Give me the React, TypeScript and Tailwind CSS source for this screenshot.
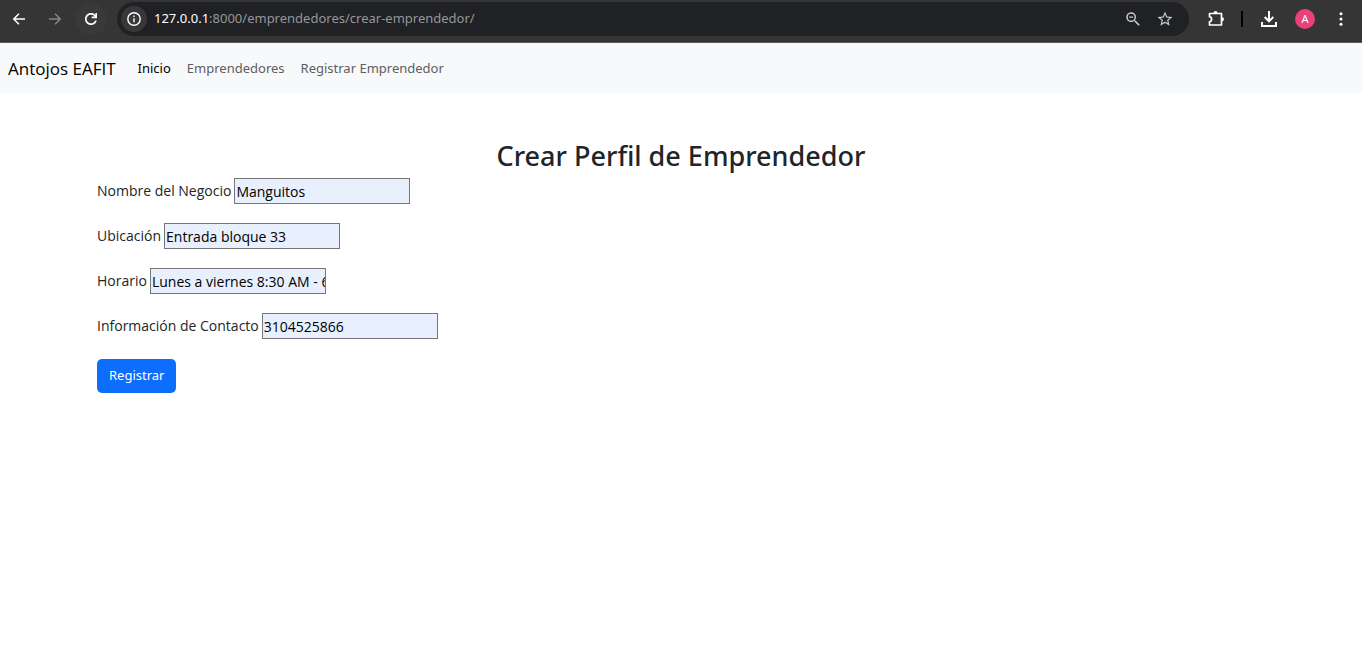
import React from "react";

type IconProps = { children: React.ReactNode; className?: string };

function Icon({ children, className = "size-[18px]" }: IconProps) {
  return (
    <svg viewBox="0 0 24 24" fill="currentColor" aria-hidden="true" className={className}>
      {children}
    </svg>
  );
}

function BrowserBar() {
  return (
    <header className="flex h-[43px] items-center border-b border-[#5c5c5c] bg-[#353535] pb-1 text-white">
      <div className="flex items-center gap-2 pl-[3px]">
        <button type="button" aria-label="Atrás" className="flex size-7 items-center justify-center">
          <Icon className="ml-1 size-[18px]">
            <path d="M20 11H7.400l5.200-5.200L11.200 4.400 3.600 12l7.600 7.600 1.400-1.400L7.400 13H20z" />
          </Icon>
        </button>
        <button type="button" aria-label="Adelante" className="flex size-7 items-center justify-center text-[#858585]">
          <Icon className="ml-1 size-[18px]">
            <path d="M4 11h12.600l-5.200-5.200 1.400-1.400 7.600 7.600-7.600 7.600-1.400-1.400 5.200-5.200H4z" />
          </Icon>
        </button>
        <button type="button" aria-label="Recargar" className="flex size-8 items-center justify-center rounded-full bg-[#393939]">
          <Icon>
            <path d="M12 20c-4.500 0-8-3.500-8-8s3.500-8 8-8c2.300 0 4.300.9 5.800 2.500V4H20v7h-7V8.800h4A5.800 5.800 0 0 0 12 6.200 5.700 5.700 0 0 0 6.200 12 5.700 5.700 0 0 0 12 17.800c2.500 0 4.600-1.500 5.400-3.800h2.300A8 8 0 0 1 12 20z" />
          </Icon>
        </button>
      </div>
      <div className="ml-[10px] flex h-[34px] min-w-0 flex-1 items-center rounded-full bg-[#202124] pl-1 pr-[15px]">
        <button type="button" aria-label="Información del sitio" className="flex size-[26px] shrink-0 items-center justify-center rounded-full bg-[#37383a]">
          <svg viewBox="0 0 16 16" fill="none" stroke="currentColor" strokeWidth="1.400" aria-hidden="true" className="size-4">
            <circle cx="8" cy="8" r="6.200" />
            <path d="M8 7.200v4M8 4.400v1.500" />
          </svg>
        </button>
        <div className="ml-[7px] min-w-0 flex-1 truncate text-[13px] text-[#969799]">
          <span className="text-white">127.0.0.1</span>:8000/emprendedores/crear-emprendedor/
        </div>
        <div className="flex items-center gap-[14px] text-[#c7c8ca]">
          <button type="button" aria-label="Zoom">
            <Icon>
              <path d="M15.500 14h-.8l-.3-.3A6.500 6.500 0 1 0 13.700 14.400l.3.300v.8l5.500 5.500 1.500-1.500zM9.500 14a4.500 4.500 0 1 1 0-9 4.500 4.500 0 0 1 0 9zM7 8.600h5v1.800H7z" />
            </Icon>
          </button>
          <button type="button" aria-label="Agregar a favoritos">
            <Icon>
              <path d="m22 9.240-7.190-.62L12 2 9.190 8.630 2 9.240l5.460 4.730L5.820 21 12 17.270 18.180 21l-1.630-7.030zM12 15.400l-3.760 2.270 1-4.280-3.320-2.880 4.380-.38L12 6.100l1.710 4.040 4.380.38-3.320 2.880 1 4.280z" />
            </Icon>
          </button>
        </div>
      </div>
      <div className="flex items-center pl-[17px] pr-3">
        <button type="button" aria-label="Extensiones">
          <svg viewBox="0 0 20 20" aria-hidden="true" className="size-5">
            <path
              d="M3.500 4.500h12v11.500h-12v-3.200a2.600 2.600 0 0 0 0-5.100z"
              fill="none"
              stroke="currentColor"
              strokeWidth="1.700"
              strokeLinejoin="round"
            />
            <path d="M7.500 4a2 2 0 0 1 4 0zM16 8.200a2 2 0 0 1 0 4z" fill="currentColor" />
          </svg>
        </button>
        <span className="ml-[15px] h-4 w-0.5 bg-black" />
        <button type="button" aria-label="Descargas" className="ml-4">
          <svg viewBox="0 0 20 20" fill="none" stroke="currentColor" strokeWidth="2" aria-hidden="true" className="size-5">
            <path d="M10 2v10M5.700 8 10 12.300 14.300 8M3 13v4h14v-4" />
          </svg>
        </button>
        <button type="button" aria-label="Perfil" className="ml-4 flex size-5 items-center justify-center rounded-full bg-[#ec407a] text-[11px]">
          A
        </button>
        <button type="button" aria-label="Menú" className="ml-[17px]">
          <Icon>
            <circle cx="12" cy="5" r="2" />
            <circle cx="12" cy="12" r="2" />
            <circle cx="12" cy="19" r="2" />
          </Icon>
        </button>
      </div>
    </header>
  );
}

const fields = [
  { id: "nombre", label: "Nombre del Negocio", value: "Manguitos" },
  { id: "ubicacion", label: "Ubicación", value: "Entrada bloque 33" },
  { id: "horario", label: "Horario", value: "Lunes a viernes 8:30 AM - 6:00 PM" },
  { id: "contacto", label: "Información de Contacto", value: "3104525866" },
];

export default function App() {
  return (
    <div className="min-h-screen bg-white font-['Noto_Sans','Open_Sans',sans-serif] text-[13px] text-[#212529]">
      <BrowserBar />
      <nav className="flex h-[50px] items-center bg-[#f8f9fa] px-2 pt-px">
        <a href="#" className="mr-[22px] font-['Open_Sans',sans-serif] text-[17px] text-black">Antojos EAFIT</a>
        <div className="flex gap-4 text-[#5d5e5f]">
          <a href="#" className="text-black">Inicio</a>
          <a href="#">Emprendedores</a>
          <a href="#">Registrar Emprendedor</a>
        </div>
      </nav>
      <main className="mx-auto max-w-[1168px] pt-[45px]">
        <h1 className="mb-[5px] text-center text-[27px] leading-[35px] font-medium">Crear Perfil de Emprendedor</h1>
        <form onSubmit={(e) => e.preventDefault()}>
          <div className="flex flex-col gap-[19px] font-['Open_Sans',sans-serif] text-sm">
            {fields.map((f) => (
              <div key={f.id} className="flex items-center gap-[3px]">
                <label htmlFor={f.id}>{f.label}</label>
                <input
                  id={f.id}
                  type="text"
                  defaultValue={f.value}
                  className="h-[26px] w-44 border border-[#767676] bg-[#e8f0fe] pl-px text-black"
                />
              </div>
            ))}
          </div>
          <button type="submit" className="mt-5 h-[34px] rounded-[5px] bg-[#0d6efd] px-3 text-white">
            Registrar
          </button>
        </form>
      </main>
    </div>
  );
}
